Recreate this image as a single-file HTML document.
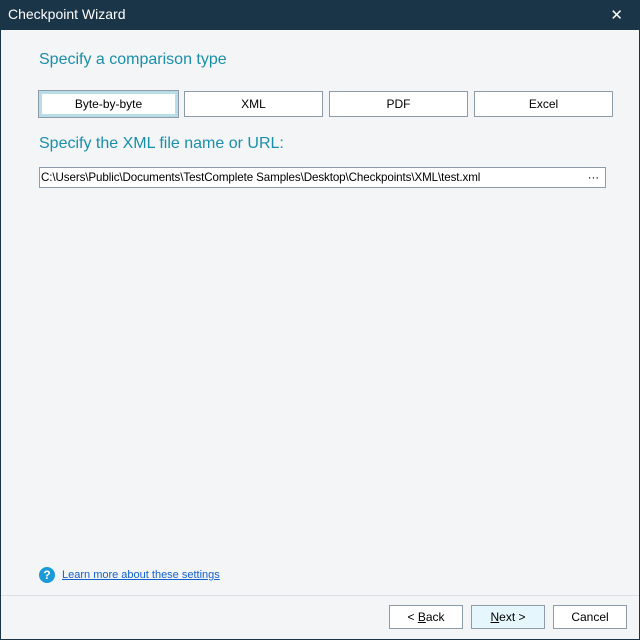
<!DOCTYPE html>
<html><head><style>
*{box-sizing:border-box;margin:0;padding:0}
body{width:640px;height:640px;background:#1a3448;font-family:"Liberation Sans",sans-serif;position:relative;overflow:hidden}
.t{position:absolute;left:8px;top:6px;color:#fff;font-size:14px}
.x{position:absolute;right:17px;top:6px;color:#fff;font-size:15px}
.c{position:absolute;left:1px;top:30px;width:638px;height:609px;background:#f3f5f7}
.h{position:absolute;color:#1a8fa8;font-size:16px}
.b{position:absolute;height:26px;border:1px solid #8d9aa8;background:#fff;font-size:12px;text-align:center;line-height:24px;color:#000}
.in{position:absolute;left:39px;top:167px;width:567px;height:21px;border:1px solid #8d9aa8;background:#fff;font-size:11.6px;line-height:19px;padding-left:1px;letter-spacing:-0.1px}
.sep{position:absolute;left:1px;top:595px;width:638px;height:1px;background:#dde0e3}
</style></head><body>
<div class="t">Checkpoint Wizard</div><div class="x">✕</div>
<div class="c"></div>
<div class="h" style="left:39px;top:51px">Specify a comparison type</div>
<div class="b" style="left:39px;top:91px;width:139px;border:3px solid #b8dde6;outline:1px solid #8d9aa8;line-height:20px">Byte-by-byte</div>
<div class="b" style="left:184px;top:91px;width:139px">XML</div>
<div class="b" style="left:329px;top:91px;width:139px">PDF</div>
<div class="b" style="left:474px;top:91px;width:139px">Excel</div>
<div class="h" style="left:39px;top:135px">Specify the XML file name or URL:</div>
<div class="in">C:\Users\Public\Documents\TestComplete Samples\Desktop\Checkpoints\XML\test.xml<span style="position:absolute;right:6px;top:0">···</span></div>
<div style="position:absolute;left:39px;top:567px;width:16px;height:16px;border-radius:50%;background:#1a9ad6;color:#fff;font-size:12px;font-weight:bold;text-align:center;line-height:16px">?</div>
<div style="position:absolute;left:62px;top:569px;font-size:11px;color:#1560c8;text-decoration:underline">Learn more about these settings</div>
<div class="sep"></div>
<div class="b" style="left:389px;top:605px;width:74px;height:24px;line-height:22px">&lt; <u>B</u>ack</div>
<div class="b" style="left:471px;top:605px;width:74px;height:24px;line-height:22px;background:#e5f6fd"><u>N</u>ext &gt;</div>
<div class="b" style="left:553px;top:605px;width:74px;height:24px;line-height:22px">Cancel</div>
</body></html>
